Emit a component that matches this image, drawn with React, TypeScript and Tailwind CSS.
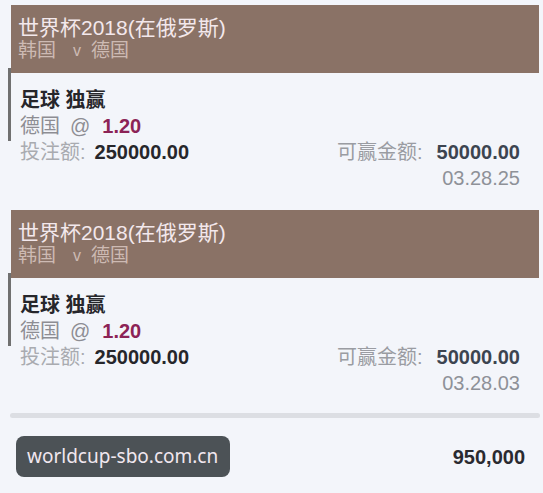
const font = "font-['Liberation_Sans','Noto_Sans_CJK_SC',sans-serif]"

type Bet = {
  event: string
  home: string
  away: string
  market: string
  pick: string
  odds: string
  stake: string
  win: string
  time: string
}

const bets: Bet[] = [
  {
    event: '世界杯2018(在俄罗斯)',
    home: '韩国',
    away: '德国',
    market: '足球 独赢',
    pick: '德国',
    odds: '1.20',
    stake: '250000.00',
    win: '50000.00',
    time: '03.28.25',
  },
  {
    event: '世界杯2018(在俄罗斯)',
    home: '韩国',
    away: '德国',
    market: '足球 独赢',
    pick: '德国',
    odds: '1.20',
    stake: '250000.00',
    win: '50000.00',
    time: '03.28.03',
  },
]

const BetCard = ({ bet }: { bet: Bet }) => (
  <div className="ml-2 mr-[4px]">
    <div className="ml-[3px] flex h-[68px] flex-col bg-[#8a7266] pl-[7px] pt-[11px]">
      <div className="text-[21px] leading-[24px] text-[#f3e8ec]">{bet.event}</div>
      <div className="flex text-[19px] leading-[22px] text-[#cdbab3]">
        <span>{bet.home}</span>
        <span className="ml-[17px] text-[16px]">v</span>
        <span className="ml-[10px]">{bet.away}</span>
      </div>
    </div>
    <div className="flex">
      <div className="-mt-[5px] h-[73px] w-[3px] shrink-0 bg-[#707070]" />
      <div className="flex flex-1 flex-col pl-[9px] pr-[19px] pt-[14px] text-[20px] leading-[26px]">
        <div className="font-bold text-[#26262b]">{bet.market}</div>
        <div className="flex items-center text-[#8d8d93]">
          <span>{bet.pick}</span>
          <span className="ml-[10px]">@</span>
          <span className="ml-[12px] font-bold text-[#8c2356]">{bet.odds}</span>
        </div>
        <div className="flex justify-between">
          <div>
            <span className="text-[#a9abb0]">投注额:</span>
            <span className="ml-[9px] font-bold text-[#26262b]">{bet.stake}</span>
          </div>
          <div>
            <span className="text-[#9a9ca2]">可赢金额:</span>
            <span className="ml-[14px] font-bold text-[#3c4450]">{bet.win}</span>
          </div>
        </div>
        <div className="text-right text-[#8e9198]">{bet.time}</div>
      </div>
    </div>
  </div>
)

export default function App() {
  return (
    <div className={`${font} flex h-[493px] w-[543px] flex-col bg-[#f3f5fa] pt-[5px]`}>
      <div className="flex flex-col gap-[19px]">
        {bets.map((bet, i) => (
          <BetCard key={i} bet={bet} />
        ))}
      </div>
      <div className="ml-[10px] mr-[3px] mt-[17px] h-[5px] rounded-full bg-[#dcdee3]" />
      <div className="mt-[18px] flex items-center justify-between pl-[16px] pr-[18px]">
        <div className="flex h-[41px] w-[214px] items-center rounded-lg bg-[#4c5256] pl-[11px] font-['Noto_Sans',sans-serif] text-[19px] text-[#f1e7ef]">
          worldcup-sbo.com.cn
        </div>
        <div className="text-[20px] font-bold text-[#2a2a30]">950,000</div>
      </div>
    </div>
  )
}
